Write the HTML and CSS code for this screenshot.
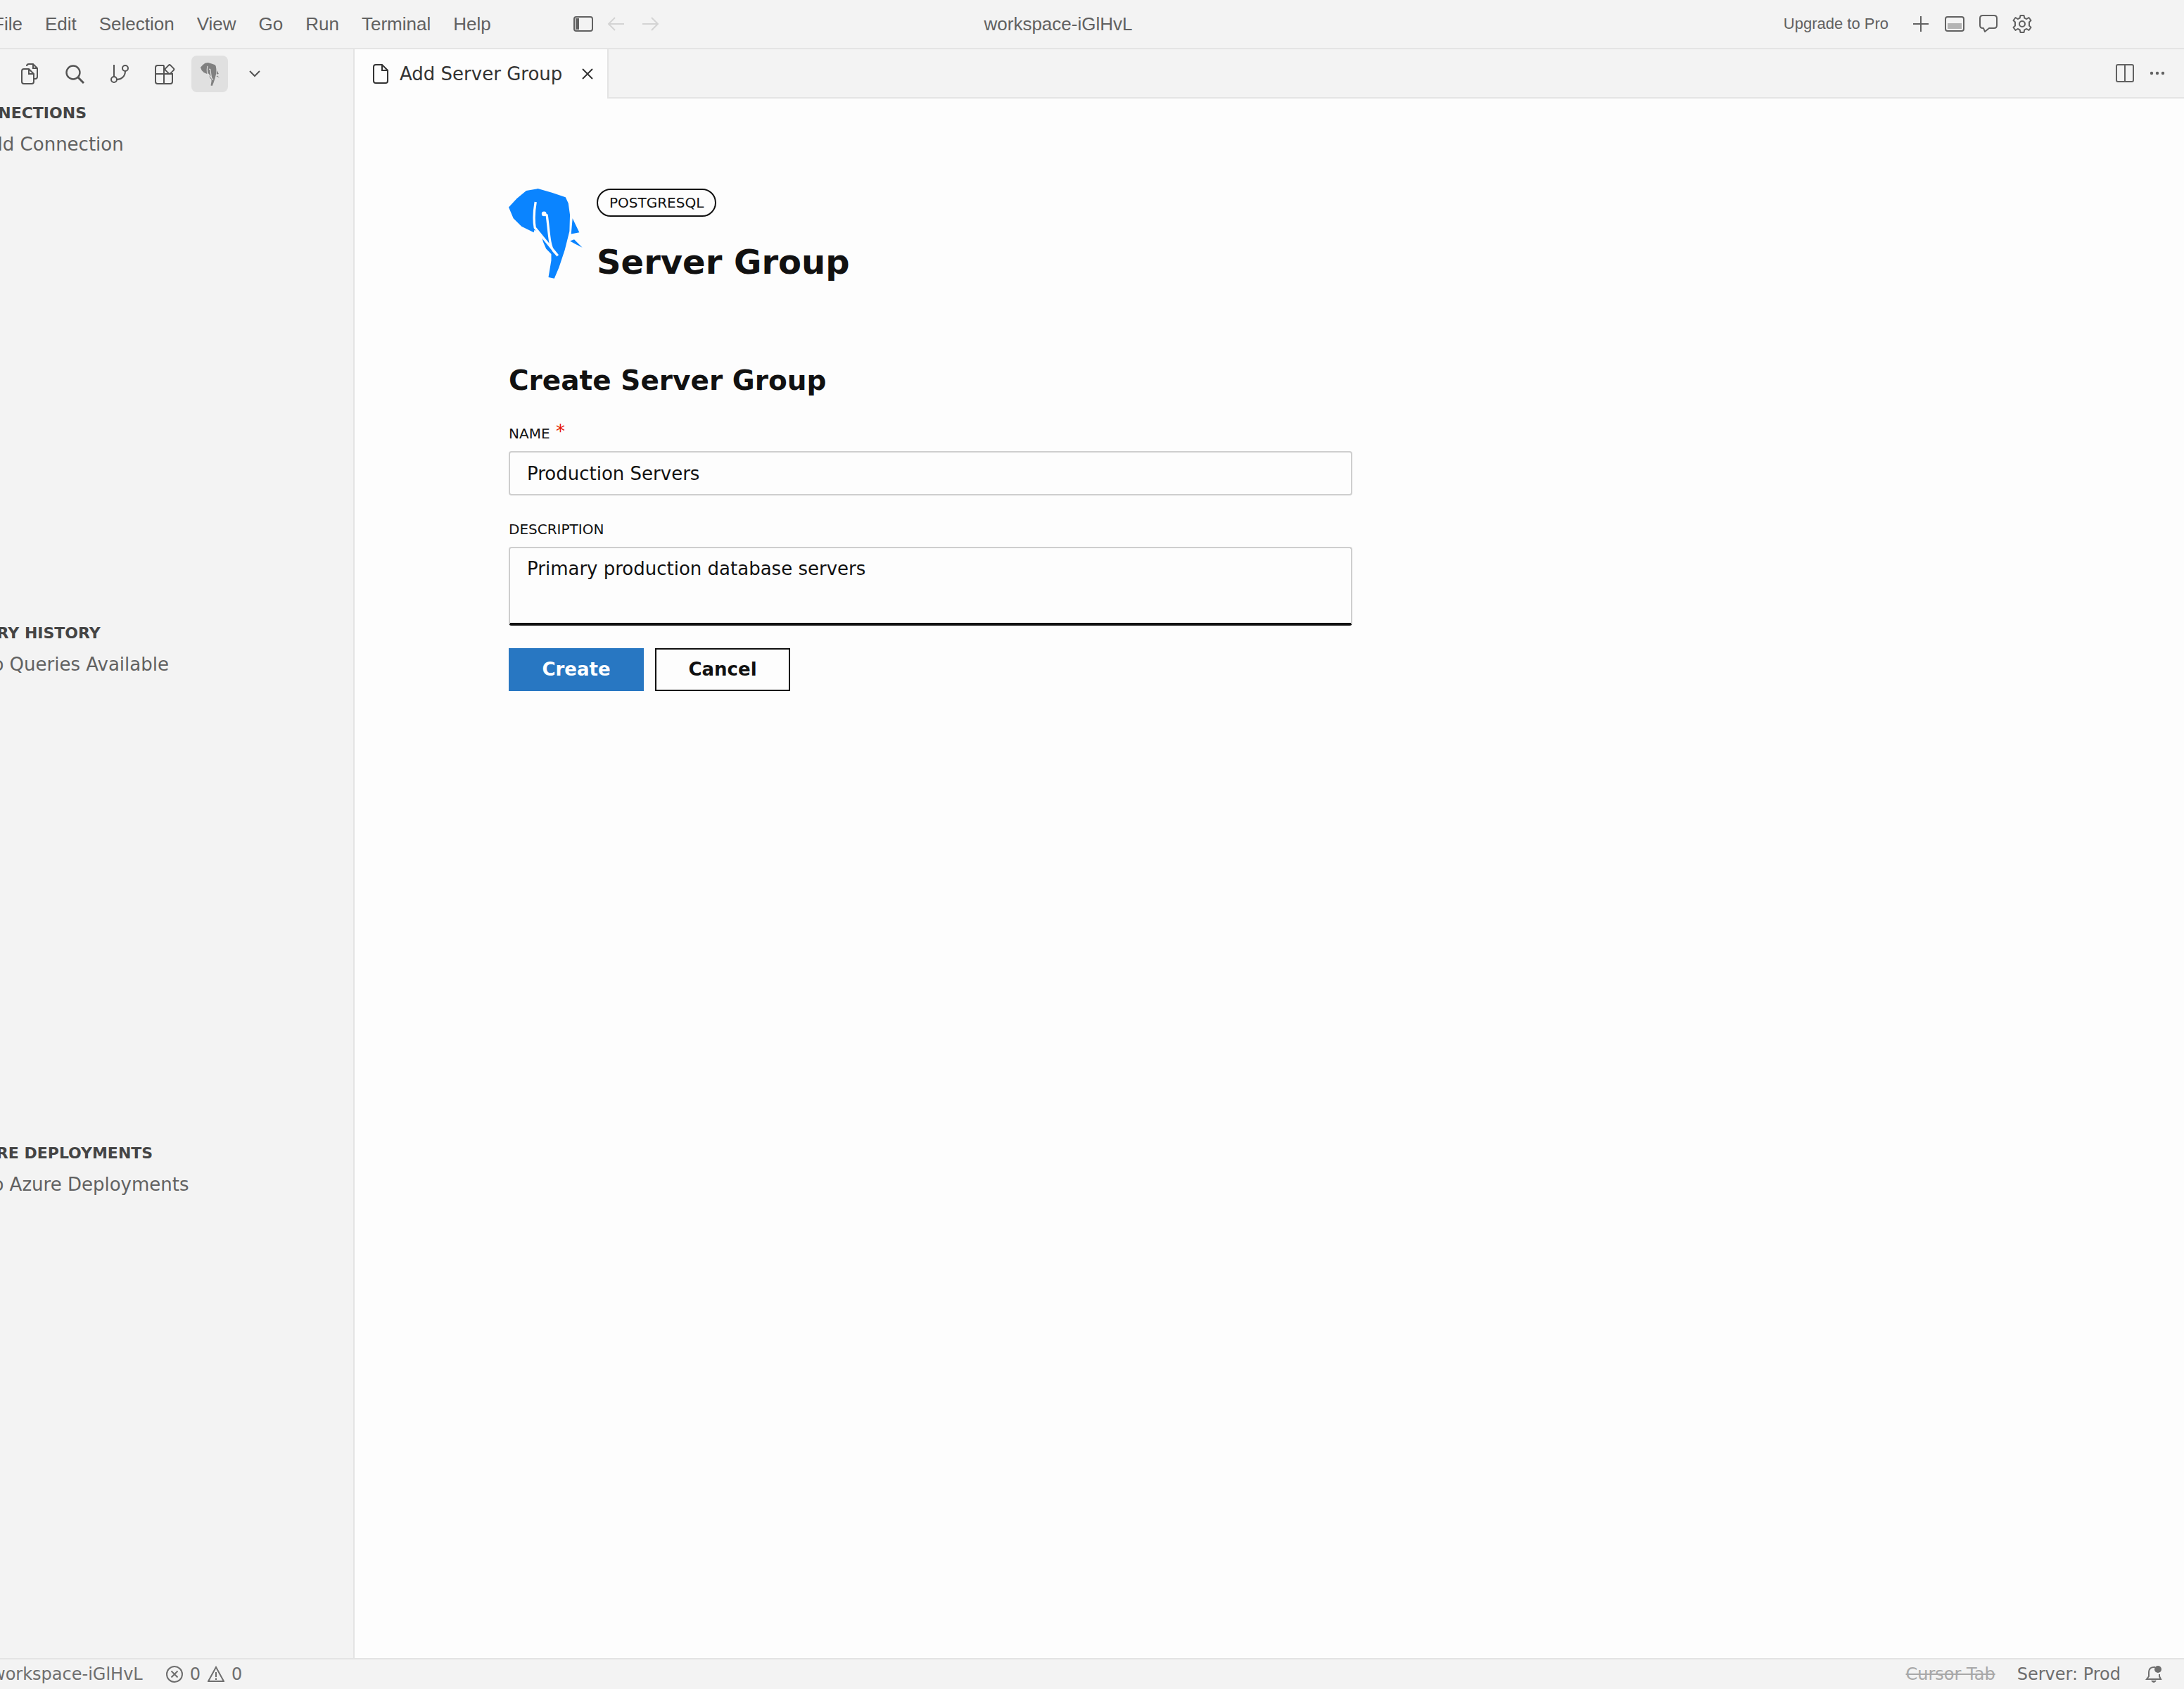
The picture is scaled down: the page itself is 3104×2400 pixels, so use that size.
FILE: index.html
```html
<!DOCTYPE html>
<html lang="en">
<head>
    <meta charset="UTF-8">
    <title>workspace-iGlHvL</title>
    <link rel="stylesheet" href="styles.css">
</head>
<body>
    <svg class="defs" width="0" height="0">
        <symbol id="elephant" viewBox="40 38 316 385">
            <path fill="currentColor" d="M40 118 L75 80 L115 47 L165 38 L225 55 L283 75 L295 100 L302 150 L300 220 L280 300 L255 375 L235 422 L210 417 L222 345 L222 318 L200 295 L187 265 L178 228 L150 215 L147 225 L95 200 L60 165 Z"/>
            <path fill="currentColor" d="M313 165 L342 225 L307 232 Z M302 262 L320 255 L355 290 L325 275 Z"/>
            <path class="cut" fill="none" d="M155 95 C148 135 146 170 152 205 L250 325 M190 145 L203 152 C212 210 212 280 232 305 L250 325"/>
            <circle class="cut-dot" cx="191" cy="146" r="10"/>
        </symbol>
    </svg>

    <header class="titlebar">
        <div class="titlebar-left">
            <nav class="menu">
                <span>File</span>
                <span>Edit</span>
                <span>Selection</span>
                <span>View</span>
                <span>Go</span>
                <span>Run</span>
                <span>Terminal</span>
                <span>Help</span>
            </nav>
            <svg class="toggle-icon" width="28" height="22" viewBox="0 0 28 22">
                <rect x="1" y="1" width="26" height="20" rx="3" fill="none" stroke="#616161" stroke-width="2"/>
                <rect x="3" y="3" width="5" height="16" fill="#616161"/>
            </svg>
            <svg class="nav-arrow" width="26" height="22" viewBox="0 0 26 22">
                <path d="M24 11 H2 M11 2 L2 11 L11 20" fill="none" stroke="#d4d4d4" stroke-width="2"/>
            </svg>
            <svg class="nav-arrow" width="26" height="22" viewBox="0 0 26 22">
                <path d="M2 11 H24 M15 2 L24 11 L15 20" fill="none" stroke="#d4d4d4" stroke-width="2"/>
            </svg>
        </div>
        <div class="window-title">workspace-iGlHvL</div>
        <div class="titlebar-right">
            <span class="upgrade">Upgrade to Pro</span>
            <span class="title-icon">
                <svg width="24" height="24" viewBox="0 0 24 24"><path d="M12 1 V23 M1 12 H23" stroke="#616161" stroke-width="2"/></svg>
            </span>
            <span class="title-icon">
                <svg width="28" height="22" viewBox="0 0 28 22">
                    <rect x="1" y="1" width="26" height="20" rx="3" fill="none" stroke="#616161" stroke-width="2"/>
                    <rect x="4" y="10" width="20" height="8" fill="#b4b4b4"/>
                </svg>
            </span>
            <span class="title-icon">
                <svg width="26" height="26" viewBox="0 0 26 26">
                    <path d="M5 1 H21 Q25 1 25 5 V15 Q25 19 21 19 H14 L8 24 L6 19 H5 Q1 19 1 15 V5 Q1 1 5 1 Z" fill="none" stroke="#616161" stroke-width="2" stroke-linejoin="round"/>
                </svg>
            </span>
            <span class="title-icon">
                <svg width="28" height="28" viewBox="0 0 28 28">
                    <circle cx="14" cy="14" r="4" fill="none" stroke="#616161" stroke-width="2"/>
                    <path d="M11.5 2 H16.5 L17.3 5.6 L20.3 7 L23.5 5 L26.5 9 L24 11.5 V16.5 L26.5 19 L23.5 23 L20.3 21 L17.3 22.4 L16.5 26 H11.5 L10.7 22.4 L7.7 21 L4.5 23 L1.5 19 L4 16.5 V11.5 L1.5 9 L4.5 5 L7.7 7 L10.7 5.6 Z" fill="none" stroke="#616161" stroke-width="2" stroke-linejoin="round"/>
                </svg>
            </span>
        </div>
    </header>

    <div class="workbench">
        <aside class="sidebar">
            <div class="activity">
                <span class="activity-item">
                    <svg width="26" height="32" viewBox="0 0 26 32" fill="none" stroke="#545454" stroke-width="2">
                        <path d="M2 12 Q2 9 5 9 H12 L19 16 V27 Q19 30 16 30 H5 Q2 30 2 27 Z M12 9 V16 H19"/>
                        <path d="M9 5 Q9 2 12 2 H18 L24 8 V20 Q24 23 21 23 H19 M18 2 V8 H24"/>
                    </svg>
                </span>
                <span class="activity-item">
                    <svg width="28" height="28" viewBox="0 0 28 28" fill="none" stroke="#545454" stroke-width="2.4">
                        <circle cx="12" cy="12" r="9.5"/>
                        <path d="M19 19 L27 27" stroke-width="3"/>
                    </svg>
                </span>
                <span class="activity-item">
                    <svg width="32" height="32" viewBox="0 0 32 32" fill="none" stroke="#545454" stroke-width="2">
                        <path d="M8 3 V20"/>
                        <circle cx="8" cy="24" r="4"/>
                        <circle cx="24" cy="8" r="4"/>
                        <path d="M24 12 C24 20 18 24 12 24"/>
                    </svg>
                </span>
                <span class="activity-item">
                    <svg width="30" height="30" viewBox="0 0 30 30" fill="none" stroke="#545454" stroke-width="2">
                        <path d="M14 3 H5 Q2 3 2 6 V26 Q2 29 5 29 H23 Q26 29 26 26 V15 H2 M14 3 V29"/>
                        <rect x="17" y="3.5" width="10" height="10" rx="2" transform="rotate(45 22 8.5)"/>
                    </svg>
                </span>
                <span class="activity-item activity-active">
                    <svg class="elephant-small" width="31" height="33"><use href="#elephant"/></svg>
                </span>
                <span class="activity-item">
                    <svg width="16" height="10" viewBox="0 0 16 10"><path d="M1 1 L8 8 L15 1" fill="none" stroke="#545454" stroke-width="2"/></svg>
                </span>
            </div>
            <section class="pane">
                <h3 class="pane-title">CONNECTIONS</h3>
                <div class="pane-item">Add Connection</div>
            </section>
            <section class="pane">
                <h3 class="pane-title">QUERY HISTORY</h3>
                <div class="pane-item">No Queries Available</div>
            </section>
            <section class="pane">
                <h3 class="pane-title">AZURE DEPLOYMENTS</h3>
                <div class="pane-item">No Azure Deployments</div>
            </section>
        </aside>

        <main class="editor">
            <div class="tabs">
                <div class="tab">
                    <svg width="24" height="28" viewBox="0 0 24 28" fill="none" stroke="#333" stroke-width="2">
                        <path d="M2 4 Q2 1 5 1 H14 L22 9 V24 Q22 27 19 27 H5 Q2 27 2 24 Z M14 1 V9 H22"/>
                    </svg>
                    <span class="tab-label">Add Server Group</span>
                    <svg class="tab-close" width="16" height="16" viewBox="0 0 16 16"><path d="M1 1 L15 15 M15 1 L1 15" stroke="#333" stroke-width="2"/></svg>
                </div>
                <div class="tabs-actions">
                    <svg width="26" height="26" viewBox="0 0 26 26" fill="none" stroke="#616161" stroke-width="2">
                        <rect x="1" y="1" width="24" height="24" rx="2"/>
                        <path d="M13 1 V25"/>
                    </svg>
                    <svg width="22" height="6" viewBox="0 0 22 6" fill="#616161">
                        <circle cx="3" cy="3" r="2.2"/>
                        <circle cx="11" cy="3" r="2.2"/>
                        <circle cx="19" cy="3" r="2.2"/>
                    </svg>
                </div>
            </div>

            <div class="page">
                <div class="page-header">
                    <svg class="logo" width="105" height="128"><use href="#elephant"/></svg>
                    <div>
                        <span class="badge">POSTGRESQL</span>
                        <h1>Server Group</h1>
                    </div>
                </div>

                <h2>Create Server Group</h2>
                <form class="group-form">
                    <label class="field-label">NAME <span class="required">*</span></label>
                    <input class="field-input" type="text" value="Production Servers">
                    <label class="field-label field-label-next">DESCRIPTION</label>
                    <textarea class="field-input field-area">Primary production database servers</textarea>
                    <div class="form-buttons">
                        <button type="button" class="btn btn-primary">Create</button>
                        <button type="button" class="btn">Cancel</button>
                    </div>
                </form>
            </div>
        </main>
    </div>

    <footer class="statusbar">
        <div class="status-left">
            <span class="status-workspace">workspace-iGlHvL</span>
            <svg width="24" height="24" viewBox="0 0 24 24" fill="none" stroke="#6e6e6e" stroke-width="2">
                <circle cx="12" cy="12" r="11"/>
                <path d="M7.5 7.5 L16.5 16.5 M16.5 7.5 L7.5 16.5"/>
            </svg>
            <span>0</span>
            <svg width="24" height="24" viewBox="0 0 24 24" fill="none" stroke="#6e6e6e" stroke-width="2">
                <path d="M12 2 L23 22 H1 Z"/>
                <path d="M12 9 V16 M12 17.5 V20"/>
            </svg>
            <span>0</span>
        </div>
        <div class="status-right">
            <span class="status-muted">Cursor Tab</span>
            <span>Server: Prod</span>
            <svg class="status-bell" width="24" height="26" viewBox="0 0 24 26" fill="none" stroke="#6e6e6e" stroke-width="2">
                <path d="M14 3 Q5 2 5 11 V16 L2 20 H22 L20 16 V13"/>
                <path d="M9 22 Q12 26 15 22" fill="#6e6e6e"/>
                <circle cx="18" cy="6" r="5" fill="#6e6e6e" stroke="none"/>
            </svg>
        </div>
    </footer>
</body>
</html>
```

FILE: styles.css
```css
body {
    margin: 0;
    width: 3104px;
    height: 2400px;
    overflow: hidden;
    font-family: "DejaVu Sans", sans-serif;
    background-color: #fdfdfd;
    color: #111;
}

.defs {
    display: block;
    height: 0;
}

.titlebar {
    display: flex;
    align-items: center;
    height: 68px;
    background-color: #f3f3f3;
    border-bottom: 2px solid #e4e4e4;
    font-family: "Liberation Sans", sans-serif;
    font-size: 26px;
    color: #616161;
}

.titlebar-left {
    flex: 0 0 1100px;
    display: flex;
    align-items: center;
}

.menu {
    display: flex;
    margin-left: -26px;
    margin-right: 101px;
}

.menu span {
    padding: 0 16px;
}

.nav-arrow {
    margin-left: 20px;
}

.nav-arrow + .nav-arrow {
    margin-left: 22px;
}

.window-title {
    flex: 0 0 808px;
    text-align: center;
}

.titlebar-right {
    flex: 1;
    display: flex;
    align-items: center;
    justify-content: flex-end;
    gap: 16px;
    padding-right: 214px;
}

.upgrade {
    font-size: 22px;
    margin-right: 14px;
}

.title-icon {
    width: 32px;
    height: 32px;
    display: flex;
    align-items: center;
    justify-content: center;
}

.workbench {
    display: flex;
    height: 2286px;
}

.sidebar {
    width: 502px;
    flex-shrink: 0;
    overflow: hidden;
    background-color: #f3f3f3;
    border-right: 2px solid #e4e4e4;
    color: #616161;
}

.activity {
    display: flex;
    gap: 12px;
    height: 70px;
    padding-left: 16px;
    align-items: center;
}

.activity-item {
    width: 52px;
    height: 52px;
    display: flex;
    align-items: center;
    justify-content: center;
    border-radius: 8px;
}

.activity-active {
    background-color: #e0e0e0;
}

.elephant-small {
    color: #808080;
    --cut: #e0e0e0;
    --cut-width: 14px;
}

.pane {
    height: 739px;
    padding-top: 6px;
    box-sizing: border-box;
}

.pane-title {
    margin: 0 0 0 -56px;
    font-size: 22px;
    line-height: 30px;
    font-weight: bold;
    color: #444;
}

.pane-item {
    margin-left: -30px;
    margin-top: 14px;
    font-size: 26px;
    line-height: 30px;
}

.editor {
    flex: 1;
    min-width: 0;
}

.tabs {
    display: flex;
    justify-content: space-between;
    height: 68px;
    background-color: #f3f3f3;
    border-bottom: 2px solid #e4e4e4;
}

.tab {
    display: flex;
    align-items: center;
    width: 361px;
    height: 70px;
    box-sizing: border-box;
    padding-left: 25px;
    background-color: #fdfdfd;
    border-right: 2px solid #e4e4e4;
    color: #333;
    font-size: 26px;
}

.tab-label {
    margin-left: 15px;
}

.tab-close {
    margin-left: 28px;
}

.tabs-actions {
    display: flex;
    align-items: center;
    gap: 22px;
    padding-right: 27px;
}

.page {
    padding: 128px 0 0 219px;
}

.page-header {
    display: flex;
    gap: 20px;
    height: 128px;
}

.logo {
    color: #0a84ff;
    --cut: #fdfdfd;
    --cut-width: 10px;
}

.cut {
    stroke: var(--cut);
    stroke-width: var(--cut-width);
}

.cut-dot {
    fill: var(--cut);
}

.badge {
    display: block;
    width: fit-content;
    box-sizing: border-box;
    height: 40px;
    padding: 0 16px;
    border: 2px solid #111;
    border-radius: 20px;
    font-size: 20px;
    line-height: 36px;
}

h1 {
    margin: 36px 0 0;
    font-size: 48px;
    line-height: 56px;
    font-weight: bold;
}

h2 {
    margin: 122px 0 0;
    font-size: 39px;
    line-height: 46px;
    font-weight: bold;
}

.group-form {
    display: flex;
    flex-direction: column;
    width: 1199px;
    margin-top: 40px;
}

.field-label {
    height: 24px;
    font-size: 20px;
    line-height: 24px;
    margin-bottom: 13px;
}

.field-label-next {
    margin-top: 36px;
}

.required {
    margin-left: 2px;
    color: #e51400;
    font-size: 26px;
    line-height: 0;
    vertical-align: 1px;
}

.field-input {
    box-sizing: border-box;
    width: 100%;
    height: 63px;
    padding: 0 24px;
    border: 2px solid #cecece;
    border-radius: 4px;
    background-color: #fdfdfd;
    font-family: "DejaVu Sans", sans-serif;
    font-size: 26px;
    color: #111;
    outline: none;
}

.field-area {
    height: 112px;
    padding: 13px 24px;
    line-height: 32px;
    resize: none;
    border-bottom: 4px solid #111;
}

.form-buttons {
    display: flex;
    gap: 16px;
    margin-top: 32px;
}

.btn {
    width: 192px;
    height: 61px;
    padding: 0 0 2px;
    background-color: #fdfdfd;
    border: 2px solid #111;
    font-family: "DejaVu Sans", sans-serif;
    font-size: 26px;
    font-weight: bold;
    color: #111;
}

.btn-primary {
    background-color: #2877c2;
    border-color: #2877c2;
    color: #fff;
}

.statusbar {
    display: flex;
    justify-content: space-between;
    align-items: center;
    height: 42px;
    background-color: #f3f3f3;
    border-top: 2px solid #e4e4e4;
    font-size: 24px;
    color: #6e6e6e;
}

.status-left {
    display: flex;
    align-items: center;
    gap: 10px;
    margin-left: -12px;
}

.status-workspace {
    margin-right: 23px;
}

.status-right {
    display: flex;
    align-items: center;
    gap: 31px;
    padding-right: 31px;
}

.status-muted {
    color: #a8a8a8;
    text-decoration: line-through;
}

.status-bell {
    margin-left: 4px;
}
```
